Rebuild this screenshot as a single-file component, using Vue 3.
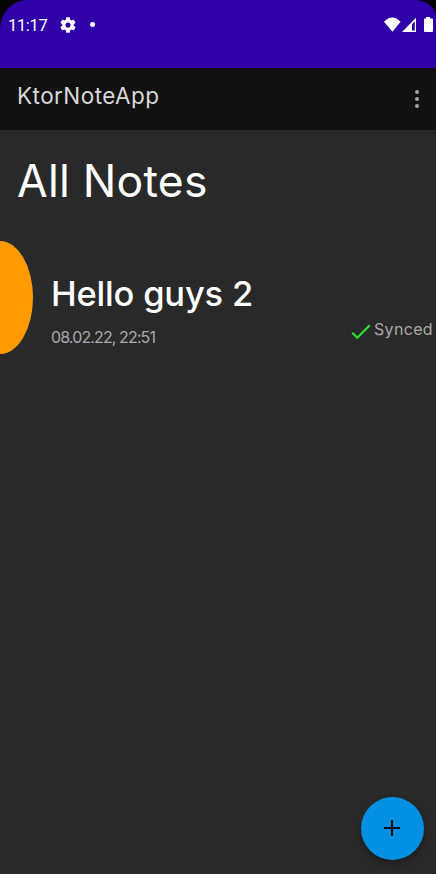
<script setup>
const note = { title: 'Hello guys 2', date: '08.02.22, 22:51', status: 'Synced' }
</script>

<template>
  <main class="screen">
    <div class="status-wrap">
      <header class="status">
        <span class="clock">11:17</span>
        <svg class="gear" width="16" height="16" viewBox="2 2 20 20">
          <path fill="#fff" d="M19.14 12.94c.04-.3.06-.61.06-.94s-.02-.64-.07-.94l2.03-1.58c.18-.14.23-.41.12-.61l-1.92-3.32c-.12-.22-.37-.29-.59-.22l-2.39.96c-.5-.38-1.03-.7-1.62-.94L14.4 2.81c-.04-.24-.24-.41-.48-.41h-3.84c-.24 0-.43.17-.47.41l-.36 2.54c-.59.24-1.13.57-1.62.94l-2.39-.96c-.22-.08-.47 0-.59.22L2.74 8.87c-.12.21-.08.47.12.61l2.03 1.58c-.05.3-.09.63-.09.94s.02.64.07.94l-2.03 1.58c-.18.14-.23.41-.12.61l1.92 3.32c.12.22.37.29.59.22l2.39-.96c.5.38 1.03.7 1.62.94l.36 2.54c.05.24.24.41.48.41h3.84c.24 0 .44-.17.47-.41l.36-2.54c.59-.24 1.13-.56 1.62-.94l2.39.96c.22.08.47 0 .59-.22l1.92-3.32c.12-.22.07-.47-.12-.61zM12 15.200a3.200 3.200 0 1 1 0-6.400 3.200 3.200 0 0 1 0 6.400z" />
        </svg>
        <span class="dot"></span>
        <svg class="signals" width="52" height="18" viewBox="0 0 52 18">
          <path fill="#fff" d="M0 5.800Q8.300-2.800 16.600 5.800L8.500 15.800z" />
          <path fill="#fff" d="M18 16 32 1.800V16z" />
          <path fill="#3000a8" d="M28 8.200 30.800 5.300V14.600H28z" />
          <path fill="#fff" d="M42 1h4v1.500h2a1 1 0 0 1 1 1V15a1 1 0 0 1-1 1h-7a1 1 0 0 1-1-1V3.500a1 1 0 0 1 1-1h1z" />
        </svg>
      </header>
    </div>
    <nav class="toolbar">
      <span class="app-name">KtorNoteApp</span>
      <span class="menu"><i></i><i></i><i></i></span>
    </nav>
    <h1 class="heading">All Notes</h1>
    <article class="note">
      <div class="color-mark"></div>
      <div class="info">
        <h2 class="title">{{ note.title }}</h2>
        <span class="date">{{ note.date }}</span>
      </div>
      <div class="sync">
        <svg width="20" height="16" viewBox="0 0 20 16">
          <path d="M1.200 8.700 6.300 13.800 18.800 1.300" fill="none" stroke="#28e332" stroke-width="2.200" />
        </svg>
        <span class="sync-text">{{ note.status }}</span>
      </div>
    </article>
    <button class="fab" aria-label="Add note">
      <svg width="16" height="16" viewBox="0 0 16 16">
        <path d="M8 0V16M0 8H16" stroke="#050b10" stroke-width="2.200" />
      </svg>
    </button>
  </main>
</template>

<style>
body { margin: 0; background: #292929; }
</style>

<style scoped>
.screen {
  position: relative;
  width: 436px;
  height: 874px;
  overflow: hidden;
  background: #292929;
  color: #fff;
  font-family: Inter, "Liberation Sans", sans-serif;
  white-space: nowrap;
}
.status-wrap { height: 68px; background: #050505; }
.status {
  display: flex;
  box-sizing: border-box;
  height: 68px;
  padding: 16px 0 0 8px;
  background: #3000a8;
  border-radius: 27px 22px 0 0 / 29px 17px 0 0;
}
.clock {
  width: 52px;
  font: 400 16.500px/19px Roboto, sans-serif;
  letter-spacing: -.35px;
}
.gear { margin-top: 1px; }
.dot {
  width: 5px;
  height: 5px;
  margin: 6px 0 0 14px;
  border-radius: 50%;
  background: #fff;
}
.signals { margin-left: auto; }
.toolbar {
  display: flex;
  justify-content: space-between;
  box-sizing: border-box;
  height: 62px;
  padding: 14px 17px 0;
  background: #111;
}
.app-name {
  color: #d8d8d8;
  font-size: 22.500px;
  font-weight: 400;
  line-height: 28px;
  letter-spacing: .45px;
}
.menu {
  display: flex;
  flex-direction: column;
  gap: 2.500px;
  padding-top: 7.500px;
}
.menu i {
  width: 4.500px;
  height: 4.500px;
  border-radius: 50%;
  background: #a3a3a3;
}
.heading {
  box-sizing: border-box;
  height: 111px;
  margin: 0;
  padding: 25px 0 0 17px;
  font-size: 44.500px;
  font-weight: 400;
  line-height: 52px;
  letter-spacing: .25px;
}
.note { display: flex; height: 113px; }
.color-mark {
  width: 33px;
  background: #ff9b00;
  border-radius: 0 100% 100% 0 / 0 50% 50% 0;
}
.info {
  display: flex;
  flex-direction: column;
  padding: 31px 0 0 18px;
}
.title {
  margin: 0;
  font-size: 34.500px;
  font-weight: 500;
  line-height: 44px;
  letter-spacing: -.2px;
}
.date {
  margin-top: 11px;
  color: #a9a9a9;
  font-size: 16px;
  font-weight: 400;
  line-height: 20px;
  letter-spacing: -.88px;
}
.sync {
  display: flex;
  gap: 3px;
  margin: 79px 3px 0 auto;
}
.sync svg { margin-top: 4px; }
.sync-text {
  color: #a9a9a9;
  font-size: 16px;
  font-weight: 400;
  line-height: 19px;
  letter-spacing: .35px;
}
.fab {
  position: absolute;
  right: 12px;
  bottom: 14px;
  display: flex;
  align-items: center;
  justify-content: center;
  width: 63px;
  height: 63px;
  padding: 0 1px 1px 0;
  border: 0;
  border-radius: 50%;
  background: #0290e2;
  box-shadow: 0 4px 7px rgba(0, 0, 0, .3);
}
</style>
